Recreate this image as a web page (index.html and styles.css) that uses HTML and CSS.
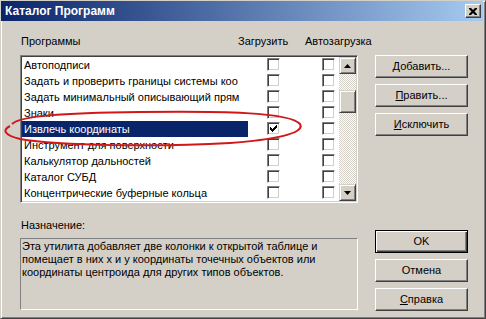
FILE: index.html
```html
<!DOCTYPE html>
<html lang="ru">

<head>
    <meta charset="UTF-8">
    <title>Каталог Программ</title>
    <link rel="stylesheet" href="styles.css">
</head>

<body>

    <div class="window">
        <div class="titlebar">
            <span class="title">Каталог Программ</span>
            <span class="close-btn">
                <svg width="8" height="7" viewBox="0 0 8 7">
                    <path d="M0 0h2l2 2 2-2h2v1l-2.5 2.5L8 6v1H6L4 5 2 7H0V6l2.5-2.5L0 1z" fill="#000"/>
                </svg>
            </span>
        </div>

        <div class="content">
            <div class="left">
                <div class="list-header">
                    <span>Программы</span>
                    <span>Загрузить</span>
                    <span>Автозагрузка</span>
                </div>

                <div class="listbox">
                    <div class="rows">
                        <div class="row">
                            <span class="name">Автоподписи</span>
                            <span class="cell"><span class="check"></span></span>
                            <span class="cell"><span class="check"></span></span>
                        </div>
                        <div class="row">
                            <span class="name">Задать и проверить границы системы коо</span>
                            <span class="cell"><span class="check"></span></span>
                            <span class="cell"><span class="check"></span></span>
                        </div>
                        <div class="row">
                            <span class="name">Задать минимальный описывающий прям</span>
                            <span class="cell"><span class="check"></span></span>
                            <span class="cell"><span class="check"></span></span>
                        </div>
                        <div class="row">
                            <span class="name">Знаки</span>
                            <span class="cell"><span class="check"></span></span>
                            <span class="cell"><span class="check"></span></span>
                        </div>
                        <div class="row selected">
                            <span class="name">Извлечь координаты</span>
                            <span class="cell">
                                <span class="check">
                                    <svg width="7" height="7" viewBox="0 0 7 7">
                                        <path d="M0 2h1v1h1v1h1V3h1V2h1V1h1V0h1v3H6v1H5v1H4v1H3v1H2V6H1V5H0z" fill="#000"/>
                                    </svg>
                                </span>
                            </span>
                            <span class="cell"><span class="check"></span></span>
                        </div>
                        <div class="row">
                            <span class="name">Инструмент для поверхности</span>
                            <span class="cell"><span class="check"></span></span>
                            <span class="cell"><span class="check"></span></span>
                        </div>
                        <div class="row">
                            <span class="name">Калькулятор дальностей</span>
                            <span class="cell"><span class="check"></span></span>
                            <span class="cell"><span class="check"></span></span>
                        </div>
                        <div class="row">
                            <span class="name">Каталог СУБД</span>
                            <span class="cell"><span class="check"></span></span>
                            <span class="cell"><span class="check"></span></span>
                        </div>
                        <div class="row">
                            <span class="name">Концентрические буферные кольца</span>
                            <span class="cell"><span class="check"></span></span>
                            <span class="cell"><span class="check"></span></span>
                        </div>
                    </div>

                    <div class="scrollbar">
                        <div class="sb-btn">
                            <svg width="7" height="4" viewBox="0 0 7 4"><path d="M3.5 0L7 4H0z" fill="#000"/></svg>
                        </div>
                        <div class="sb-track">
                            <div class="sb-thumb"></div>
                        </div>
                        <div class="sb-btn">
                            <svg width="7" height="4" viewBox="0 0 7 4"><path d="M0 0h7L3.5 4z" fill="#000"/></svg>
                        </div>
                    </div>
                </div>

                <div class="desc-label">Назначение:</div>
                <div class="desc">
                    Эта утилита добавляет две колонки к открытой таблице и<br>
                    помещает в них x и y координаты точечных объектов или<br>
                    координаты центроида для других типов объектов.
                </div>
            </div>

            <div class="side">
                <div class="btn-group">
                    <div class="btn"><u>Д</u>обавить...</div>
                    <div class="btn"><u>П</u>равить...</div>
                    <div class="btn"><u>И</u>сключить</div>
                </div>
                <div class="btn-group bottom">
                    <div class="btn default">OK</div>
                    <div class="btn">Отмена</div>
                    <div class="btn"><u>С</u>правка</div>
                </div>
            </div>
        </div>

        <!-- hand drawn marker around the selected row -->
        <svg class="marker" width="486" height="319" viewBox="0 0 486 319">
            <path d="M12 124 C20 116, 60 113, 140 112 C220 111, 290 112, 300 124 C306 134, 270 140, 230 143 C160 147, 60 146, 20 139 C4 135, 2 130, 10 126"
                fill="none" stroke="#d01818" stroke-width="2"/>
        </svg>
    </div>

</body>

</html>
```

FILE: styles.css
```css
body {
    margin: 0;
    font-family: "Liberation Sans", Arial, sans-serif;
    font-size: 11px;
    color: #000;
    background: #d4d0c8;
}

.window {
    position: relative;
    box-sizing: border-box;
    width: 486px;
    height: 319px;
    padding: 0 2px 2px 0;
    background: #d4d0c8;
    border: 1px solid;
    border-color: #d4d0c8 #404040 #404040 #d4d0c8;
    box-shadow: inset 1px 1px #fff, inset -1px -1px #808080;
}

.titlebar {
    display: flex;
    align-items: center;
    justify-content: space-between;
    height: 20px;
    padding-left: 4px;
    background: linear-gradient(to right, #0a246a, #a6caf0);
}

.title {
    color: #fff;
    font-weight: bold;
    font-size: 12px;
}

.close-btn {
    display: flex;
    align-items: center;
    justify-content: center;
    box-sizing: border-box;
    width: 16px;
    height: 14px;
    margin-right: 2px;
    background: #d4d0c8;
    border: 1px solid;
    border-color: #fff #404040 #404040 #fff;
    box-shadow: inset -1px -1px #808080;
}

.content {
    display: flex;
    padding-left: 19px;
}

.left {
    width: 338px;
}

.list-header {
    display: grid;
    grid-template-columns: 217px 67px auto;
    margin-top: 14px;
    padding-left: 1px;
    line-height: 13px;
    height: 13px;
}

.listbox {
    display: flex;
    box-sizing: border-box;
    height: 148px;
    margin-top: 7px;
    background: #fff;
    border: 1px solid;
    border-color: #808080 #fff #fff #808080;
    box-shadow: inset 1px 1px #404040, inset -1px -1px #d4d0c8;
    padding: 1px;
}

.rows {
    flex: 1;
    overflow: hidden;
}

.row {
    display: grid;
    grid-template-columns: 226px 55px auto;
    height: 16px;
}

.name {
    padding-left: 2px;
    line-height: 16px;
    white-space: nowrap;
    overflow: hidden;
}

.selected .name {
    background: #0a246a;
    color: #fff;
}

.cell {
    padding-left: 19px;
    padding-top: 1px;
}

.check {
    display: flex;
    align-items: center;
    justify-content: center;
    box-sizing: border-box;
    width: 13px;
    height: 13px;
    background: #fff;
    border: 1px solid;
    border-color: #808080 #fff #fff #808080;
    box-shadow: inset 1px 1px #404040, inset -1px -1px #d4d0c8;
}

.scrollbar {
    display: flex;
    flex-direction: column;
    width: 17px;
}

.sb-btn,
.sb-thumb {
    box-sizing: border-box;
    background: #d4d0c8;
    border: 1px solid;
    border-color: #d4d0c8 #404040 #404040 #d4d0c8;
    box-shadow: inset 1px 1px #fff, inset -1px -1px #808080;
}

.sb-btn {
    display: flex;
    align-items: center;
    justify-content: center;
    height: 17px;
}

.sb-track {
    flex: 1;
    background: conic-gradient(#d4d0c8 25%, #fff 0 50%, #d4d0c8 0 75%, #fff 0) 0 0 / 2px 2px;
}

.sb-thumb {
    height: 23px;
    margin-top: 16px;
}

.desc-label {
    margin-top: 16px;
    padding-left: 1px;
    line-height: 13px;
}

.desc {
    box-sizing: border-box;
    height: 72px;
    margin-top: 6px;
    padding: 1px 1px 0 1px;
    line-height: 13px;
    border: 1px solid;
    border-color: #808080 #fff #fff #808080;
}

.side {
    width: 93px;
    margin-left: 17px;
    padding-top: 34px;
}

.btn-group {
    display: flex;
    flex-direction: column;
    gap: 6px;
}

.btn-group.bottom {
    margin-top: 94px;
}

.btn {
    box-sizing: border-box;
    height: 23px;
    line-height: 21px;
    text-align: center;
    background: #d4d0c8;
    border: 1px solid;
    border-color: #fff #404040 #404040 #fff;
    box-shadow: inset -1px -1px #808080;
}

.btn.default {
    border-color: #000;
    box-shadow: inset 1px 1px #fff, inset -1px -1px #404040, inset -2px -2px #808080;
}

.marker {
    position: absolute;
    top: -1px;
    left: -1px;
    pointer-events: none;
}
```
